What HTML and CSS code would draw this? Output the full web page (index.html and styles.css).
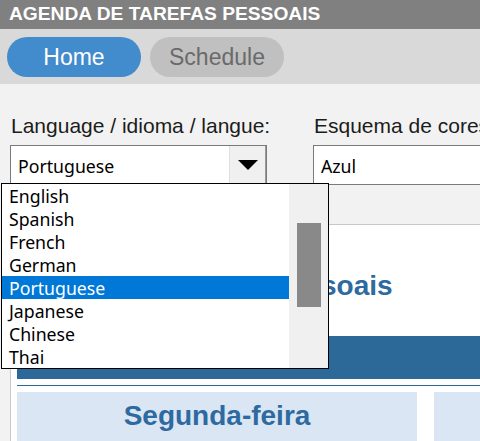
FILE: index.html
```html
<!DOCTYPE html>
<html lang="pt">
<head>
<meta charset="utf-8">
<title>Agenda de Tarefas Pessoais</title>
<link rel="stylesheet" href="styles.css">
</head>
<body>
<div class="app">
  <header class="titlebar">AGENDA DE TAREFAS PESSOAIS</header>
  <nav class="nav">
    <button class="tab tab-active">Home</button>
    <button class="tab">Schedule</button>
  </nav>
  <section class="settings">
    <div class="field field-lang">
      <label class="field-label">Language / idioma / langue:</label>
      <div class="select">
        <span class="select-value">Portuguese</span>
        <span class="select-arrow"><span class="triangle"></span></span>
      </div>
      <ul class="dropdown">
        <li class="option">English</li>
        <li class="option">Spanish</li>
        <li class="option">French</li>
        <li class="option">German</li>
        <li class="option option-selected">Portuguese</li>
        <li class="option">Japanese</li>
        <li class="option">Chinese</li>
        <li class="option">Thai</li>
        <li class="scrollbar"><span class="thumb"></span></li>
      </ul>
    </div>
    <div class="field">
      <label class="field-label">Esquema de cores:</label>
      <div class="select select-plain">
        <span class="select-value">Azul</span>
      </div>
    </div>
  </section>
  <main class="panel">
    <h1 class="panel-title">Agenda de Tarefas Pessoais</h1>
    <div class="bar"></div>
    <div class="rule"></div>
    <div class="days">
      <div class="day"><h2 class="day-name">Segunda-feira</h2></div>
      <div class="day"><h2 class="day-name">Terça-feira</h2></div>
    </div>
  </main>
</div>
</body>
</html>
```
FILE: styles.css
```css
html, body {
  margin: 0;
  padding: 0;
  overflow: hidden;
  background: #f2f2f2;
}

.app {
  width: 900px;
  font-family: "Liberation Sans", Arial, sans-serif;
}

.titlebar {
  height: 29px;
  line-height: 27px;
  padding-left: 9px;
  background: #808080;
  color: #ffffff;
  font-weight: bold;
  font-size: 19.2px;
  box-sizing: border-box;
}

.nav {
  height: 55px;
  box-sizing: border-box;
  padding: 8px 7px 0;
  background: #d9d9d9;
  display: flex;
  gap: 9px;
  align-items: flex-start;
}

.tab {
  width: 134px;
  height: 40px;
  border: none;
  border-radius: 20px;
  background: #c0c0c0;
  color: #6a6a6a;
  font-family: "Liberation Sans", Arial, sans-serif;
  font-size: 23px;
  line-height: 40px;
  padding: 0;
}

.tab-active {
  background: #428bcd;
  color: #ffffff;
}

.settings {
  display: flex;
  gap: 46px;
  padding: 30px 0 39px 10px;
  background: #f2f2f2;
}

.field {
  position: relative;
  width: 257px;
  flex: none;
}

.field-label {
  display: block;
  font-size: 21px;
  line-height: 23px;
  margin-bottom: 8px;
  margin-left: 1px;
  color: #1c1c1c;
  white-space: nowrap;
}

.select {
  height: 40px;
  box-sizing: border-box;
  border: 1px solid #7a7a7a;
  background: #ffffff;
  display: flex;
  align-items: flex-start;
  font-family: "Noto Sans", "Open Sans", sans-serif;
  font-size: 17.7px;
  color: #000000;
}

.select-value {
  flex: 1;
  padding: 9px 0 0 7px;
  line-height: 23px;
}

.select-arrow {
  width: 37px;
  height: 38px;
  box-sizing: border-box;
  background: #f0f0f0;
  border-left: 1px solid #dedede;
  border-right: 1px solid #9a9a9a;
  border-bottom: 1px solid #9a9a9a;
  display: flex;
  align-items: center;
  justify-content: center;
}

.triangle {
  width: 0;
  height: 0;
  border-left: 10px solid transparent;
  border-right: 10px solid transparent;
  border-top: 10px solid #000000;
}

.dropdown {
  position: absolute;
  left: -9px;
  top: 69px;
  width: 328px;
  height: 186px;
  box-sizing: border-box;
  margin: 0;
  padding: 0 39px 0 0;
  list-style: none;
  border: 1px solid #000000;
  background: #ffffff;
  font-family: "Noto Sans", "Open Sans", sans-serif;
  font-size: 17.7px;
  color: #000000;
  z-index: 10;
}

.option {
  height: 23px;
  line-height: 25px;
  padding-left: 7px;
  overflow: hidden;
}

.option-selected {
  background: #0078d7;
  color: #ffffff;
}

.scrollbar {
  position: absolute;
  top: 0;
  right: 0;
  width: 39px;
  height: 184px;
  background: #f0f0f0;
}

.thumb {
  position: absolute;
  left: 8px;
  top: 39px;
  width: 24px;
  height: 84px;
  background: #898989;
}

.panel {
  margin-left: 10px;
  border-left: 1px solid #c8c8c8;
  border-top: 1px solid #c8c8c8;
  background: #ffffff;
  padding-bottom: 40px;
}

.panel-title {
  margin: 45px 0 34px 4px;
  font-size: 28px;
  line-height: 32px;
  font-weight: bold;
  color: #2e6aa0;
}

.bar {
  margin-left: 6px;
  height: 43px;
  background: #2c6898;
}

.rule {
  margin: 6px 0 6px 6px;
  height: 1px;
  background: #2c6898;
}

.days {
  margin-left: 6px;
  display: flex;
  gap: 17px;
}

.day {
  width: 400px;
  height: 120px;
  background: #dae6f4;
  padding-top: 8px;
  box-sizing: border-box;
  flex: none;
}

.day-name {
  margin: 0;
  text-align: center;
  font-size: 28px;
  line-height: 32px;
  font-weight: bold;
  color: #2e6aa0;
}
```
